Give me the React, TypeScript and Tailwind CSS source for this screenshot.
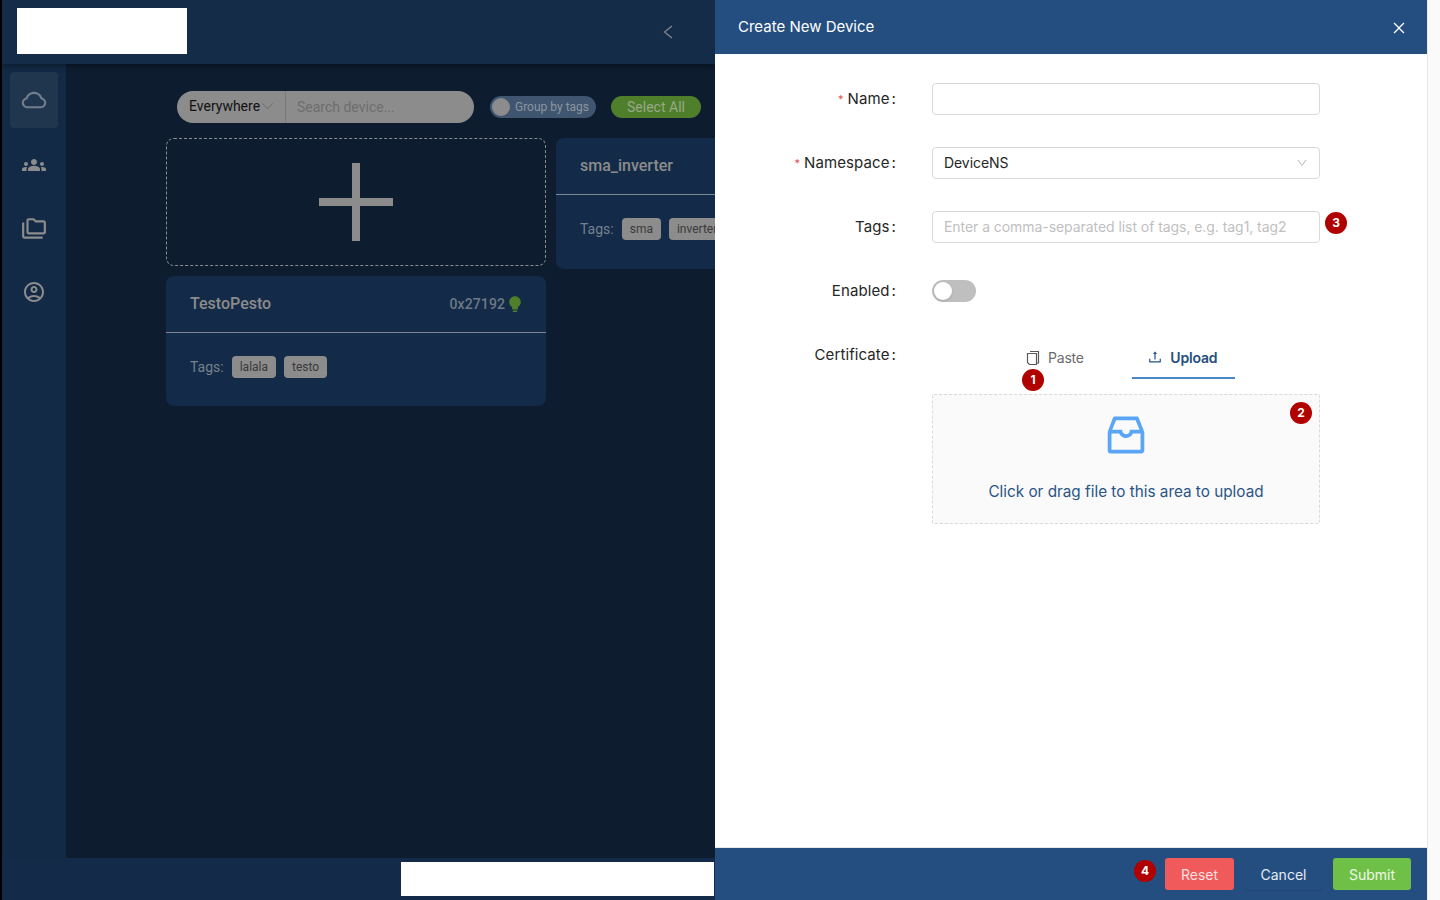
import { AiFillBulb, AiOutlineClose, AiOutlineCloud, AiOutlineDown, AiOutlineInbox, AiOutlineUpload } from "react-icons/ai";
import { MdGroups, MdOutlineAccountCircle, MdOutlineFolderCopy } from "react-icons/md";

const roboto = "font-['Roboto',sans-serif]";

const Badge = ({ n, className }: { n: number; className: string }) => (
    <span className={`absolute flex h-[22px] w-[22px] items-center justify-center rounded-full bg-[#b00000] text-[12px] font-bold text-white font-['Inter',sans-serif] ${className}`}>
        {n}
    </span>
);

const Tag = ({ label }: { label: string }) => (
    <span className="flex h-[22px] items-center rounded-[4px] bg-[#8c8c8c] px-2 text-[12px] text-[#3a3a3a] whitespace-nowrap">
        {label}
    </span>
);

const Sidebar = () => (
    <div className="flex w-[64px] shrink-0 flex-col items-center bg-[#122a46] pt-2 text-[#8c8c8c]">
        <div className="flex h-[56px] w-[48px] items-center justify-center rounded-[4px] bg-[#20364f]">
            <AiOutlineCloud size={28} className="text-[#717e8d]" />
        </div>
        <div className="mt-[9px] flex h-[56px] items-center justify-center"><MdGroups size={24} /></div>
        <div className="mt-2 flex h-[56px] items-center justify-center"><MdOutlineFolderCopy size={26} /></div>
        <div className="mt-[7px] flex h-[56px] items-center justify-center"><MdOutlineAccountCircle size={24} /></div>
    </div>
);

const Toolbar = () => (
    <div className="flex h-[32px] items-center pl-[111px]">
        <div className="flex h-[32px] w-[297px] shrink-0 items-center rounded-full bg-[#8c8c8c]">
            <div className="flex h-full w-[109px] items-center gap-[2px] border-r border-[#7a7a7a] pb-[2px] pl-[12px] text-[14px] text-[#111]">
                Everywhere
                <svg width="11" height="7" viewBox="0 0 11 7" fill="none" stroke="#6b6b6b" strokeWidth="1">
                    <path d="M0.5 0.5L5.5 6L10.5 0.5" />
                </svg>
            </div>
            <span className="pl-[11px] text-[14px] text-[#6e6e6e]">Search device...</span>
        </div>
        <div className="ml-[16px] flex h-[22px] w-[106px] shrink-0 items-center rounded-full bg-[#3f5570] pl-[1px] text-[12px] text-[#8c959f]">
            <span className="ml-[1px] h-[18px] w-[18px] rounded-full bg-[#8c8c8c]" />
            <span className="ml-[5px]">Group by tags</span>
        </div>
        <div className="ml-[15px] flex h-[22px] w-[90px] shrink-0 items-center justify-center rounded-full bg-[#4f7f2a] text-[14px] text-[#97a88b]">
            Select All
        </div>
    </div>
);

const DeviceCard = ({ name, code, tags, h }: { name: string; code?: string; tags: string[]; h: string }) => (
    <div className={`w-[380px] shrink-0 rounded-[8px] bg-[#132b48] ${h}`}>
        <div className="flex h-[57px] items-center justify-between border-b border-[#7c8794] px-6">
            <span className="text-[16px] font-medium text-[#8c8c8c]">{name}</span>
            {code && (
                <span className="-mr-[2px] flex items-center text-[14px] font-medium tracking-[0.1px] text-[#6f7884]">
                    {code}
                    <AiFillBulb size={18} className="mb-[1px] ml-[1px] text-[#4f7f2a]" />
                </span>
            )}
        </div>
        <div className="flex items-center gap-2 px-6 pt-[23px] text-[14px] text-[#75808d]">
            <span>Tags:</span>
            {tags.map((t) => <Tag key={t} label={t} />)}
        </div>
    </div>
);

const Dashboard = () => (
    <div className={`flex h-full w-[713px] shrink-0 flex-col overflow-hidden ${roboto}`}>
        <div className="z-10 flex h-[64px] shrink-0 items-center justify-between bg-[#152c49] pb-[2px] pl-[15px] pr-[42px] shadow-[0_2px_6px_rgba(0,0,0,0.4)]">
            <div className="h-[46px] w-[170px] bg-white" />
            <svg width="10" height="14" viewBox="0 0 10 14" fill="none" stroke="#8c8c8c" strokeWidth="1.1" className="mt-[2px]">
                <path d="M9 1L1.5 7L9 13" />
            </svg>
        </div>
        <div className="flex min-h-0 flex-1">
            <Sidebar />
            <div className="min-w-0 flex-1 overflow-hidden bg-[#0d1c2f] pt-[27px]">
                <Toolbar />
                <div className="mt-[15px] flex items-start gap-[10px] pl-[100px]">
                    <div className="flex shrink-0 flex-col gap-[10px]">
                        <div className="flex h-[128px] w-[380px] items-center justify-center rounded-[8px] border border-dashed border-[#8c8c8c]">
                            <svg width="74" height="78" viewBox="0 0 74 78" fill="#8c8c8c">
                                <rect x="33" y="0" width="8" height="78" />
                                <rect x="0" y="35" width="74" height="8" />
                            </svg>
                        </div>
                        <DeviceCard name="TestoPesto" code="0x27192" tags={["lalala", "testo"]} h="h-[130px]" />
                    </div>
                    <DeviceCard name="sma_inverter" tags={["sma", "inverter"]} h="h-[131px]" />
                </div>
            </div>
        </div>
        <div className="flex h-[42px] shrink-0 items-center justify-end bg-[#132b48] pr-[1px]">
            <div className="h-[34px] w-[313px] bg-white" />
        </div>
    </div>
);

const Field = ({ label, required, children, className }: { label: string; required?: boolean; children: React.ReactNode; className: string }) => (
    <div className={`flex items-start ${className}`}>
        <div className="flex h-[32px] w-[182px] shrink-0 items-center justify-end pr-[1px] text-[15px] tracking-[0.1px] text-[#262626]">
            {required && <span className="mr-[4px] text-[11px] text-[#e05252]">*</span>}
            {label}
            <span className="ml-[2px]">:</span>
        </div>
        <div className="relative ml-[35px] w-[388px]">{children}</div>
    </div>
);

const inputCls = "flex h-[32px] w-full items-center rounded-[4px] border border-[#d9d9d9] pb-px pl-[11px] pr-[11px] text-[14px] tracking-[-0.06px]";

const Drawer = () => (
    <div className="relative flex h-full w-[712px] shrink-0 flex-col bg-white font-['Inter',sans-serif]">
        <div className="flex h-[54px] shrink-0 items-center justify-between bg-[#244e80] pl-[23px] pr-[20px] text-white">
            <span className="text-[15px]">Create New Device</span>
            <AiOutlineClose size={16} className="mt-[2px]" />
        </div>
        <div className="flex-1 pt-[29px]">
            <Field label="Name" required className="mb-[32px]">
                <div className={inputCls} />
            </Field>
            <Field label="Namespace" required className="mb-[32px]">
                <div className={`${inputCls} justify-between text-[#262626]`}>
                    DeviceNS
                    <AiOutlineDown size={12} className="text-[#bfbfbf]" />
                </div>
            </Field>
            <Field label="Tags" className="mb-[32px]">
                <div className={`${inputCls} text-[#bfbfbf]`}>Enter a comma-separated list of tags, e.g. tag1, tag2</div>
                <Badge n={3} className="-right-[27px] top-px" />
            </Field>
            <Field label="Enabled" className="mb-[32px]">
                <div className="flex h-[32px] items-center">
                    <div className="flex h-[22px] w-[44px] items-center rounded-full bg-[#bfbfbf] pl-[2px]">
                        <span className="h-[18px] w-[18px] rounded-full bg-white shadow-sm" />
                    </div>
                </div>
            </Field>
            <Field label="Certificate" className="">
                <div className="flex h-[40px] items-start pl-[94px] text-[14px] tracking-[-0.2px]">
                    <div className="flex items-start pt-[8px] text-[#6b6b6b]">
                        <svg width="14" height="16" viewBox="0 0 14 16" fill="none" stroke="#595959" strokeWidth="1.2" className="mr-2 mt-[3px]">
                            <path d="M4 1.5h8.5v11.5H11" />
                            <path d="M1.5 3.5H10.5V14.5H3.5L1.5 12.5Z" />
                        </svg>
                        Paste
                    </div>
                    <div className="ml-[48px] flex h-[40px] w-[103px] items-start justify-center gap-[7px] border-b-2 border-[#4a86c8] pr-[2px] pt-[8px] font-semibold text-[#244e80]">
                        <AiOutlineUpload size={16} className="mt-[2px]" />
                        Upload
                    </div>
                </div>
                <div className="relative mt-[15px] flex h-[130px] flex-col items-center rounded-[2px] border border-dashed border-[#d9d9d9] bg-[#fafafa] pt-[15px]">
                    <AiOutlineInbox size={50} className="text-[#5aa5f5]" />
                    <span className="mt-[21px] text-[15.3px] text-[#2a5486]">Click or drag file to this area to upload</span>
                    <Badge n={2} className="right-[7px] top-[7px]" />
                </div>
                <Badge n={1} className="left-[90px] top-[30px]" />
            </Field>
        </div>
        <div className="relative flex h-[53px] shrink-0 items-center justify-end gap-[11px] border-t border-[#e8e8e8] bg-[#244e80] pr-[16px] text-[14px]">
            <Badge n={4} className="left-[419px] top-[12px]" />
            <div className="flex h-[32px] w-[69px] items-center justify-center rounded-[3px] bg-[#f05a5a] text-[#fbe0e0]">Reset</div>
            <div className="flex h-[32px] w-[77px] items-center justify-center rounded-[4px] text-[#e4ecf5] shadow-[0_1px_0_#1f4571]">Cancel</div>
            <div className="flex h-[32px] w-[78px] items-center justify-center rounded-[3px] bg-[#6ec046] text-[#eef8e8]">Submit</div>
        </div>
    </div>
);

export default function App() {
    return (
        <div className="flex h-[900px] w-[1440px] overflow-hidden bg-black pl-[2px]">
            <Dashboard />
            <Drawer />
            <div className="h-full flex-1 border-l border-[#e8e8e8] bg-[#fafafa]" />
        </div>
    );
}
